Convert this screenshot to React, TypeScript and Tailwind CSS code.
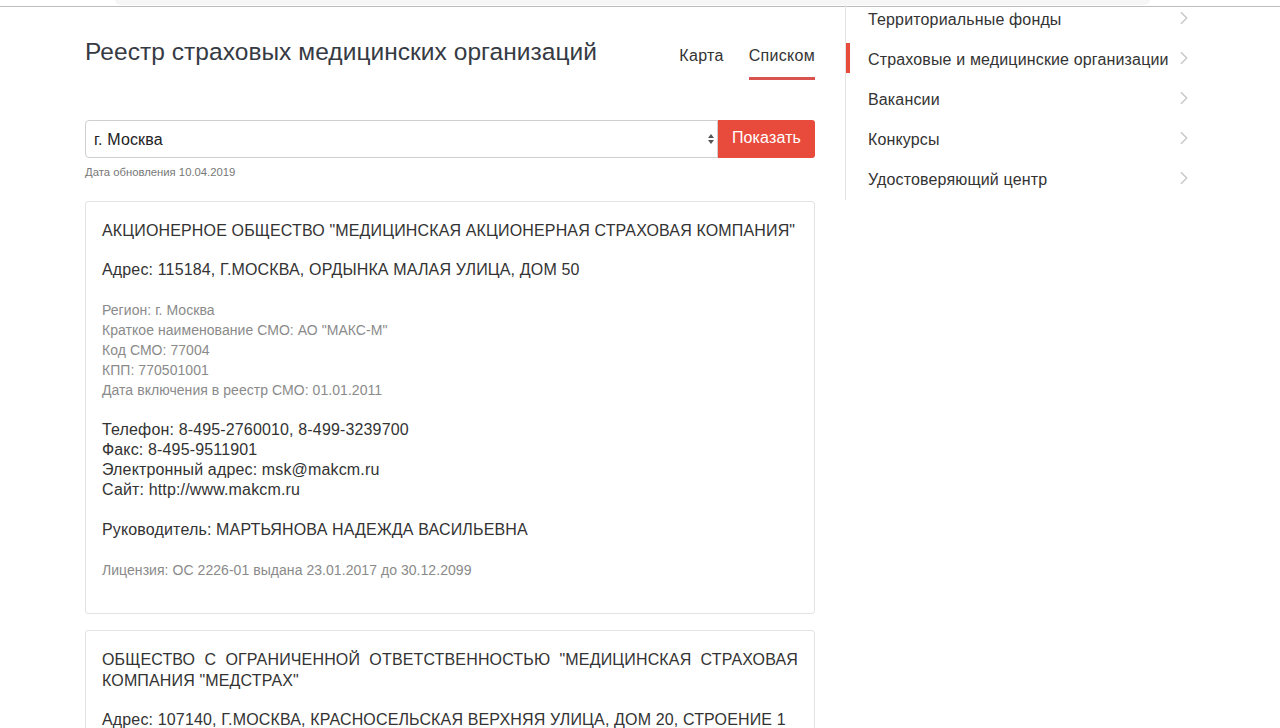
import { ChevronRight } from 'lucide-react';

interface Org {
  name: string;
  address: string;
  region: string;
  shortName: string;
  code: string;
  kpp: string;
  included: string;
  phone: string;
  fax: string;
  email: string;
  site: string;
  head: string;
  license: string;
}

const orgs: Org[] = [
  {
    name: 'АКЦИОНЕРНОЕ ОБЩЕСТВО "МЕДИЦИНСКАЯ АКЦИОНЕРНАЯ СТРАХОВАЯ КОМПАНИЯ"',
    address: '115184, Г.МОСКВА, ОРДЫНКА МАЛАЯ УЛИЦА, ДОМ 50',
    region: 'г. Москва',
    shortName: 'АО "МАКС-М"',
    code: '77004',
    kpp: '770501001',
    included: '01.01.2011',
    phone: '8-495-2760010, 8-499-3239700',
    fax: '8-495-9511901',
    email: 'msk@makcm.ru',
    site: 'http://www.makcm.ru',
    head: 'МАРТЬЯНОВА НАДЕЖДА ВАСИЛЬЕВНА',
    license: 'ОС 2226-01 выдана 23.01.2017 до 30.12.2099',
  },
  {
    name: 'ОБЩЕСТВО С ОГРАНИЧЕННОЙ ОТВЕТСТВЕННОСТЬЮ "МЕДИЦИНСКАЯ СТРАХОВАЯ КОМПАНИЯ "МЕДСТРАХ"',
    address: '107140, Г.МОСКВА, КРАСНОСЕЛЬСКАЯ ВЕРХНЯЯ УЛИЦА, ДОМ 20, СТРОЕНИЕ 1',
    region: 'г. Москва',
    shortName: 'ООО "МСК "МЕДСТРАХ"',
    code: '77011',
    kpp: '770801001',
    included: '01.01.2011',
    phone: '8-495-6409393',
    fax: '8-495-6409393',
    email: 'info@medstrakh.ru',
    site: 'http://www.medstrakh.ru',
    head: 'ИВАНОВ ИВАН ИВАНОВИЧ',
    license: 'ОС 3676-01 выдана 10.10.2017 до 30.12.2099',
  },
];

const menu = [
  'Территориальные фонды',
  'Страховые и медицинские организации',
  'Вакансии',
  'Конкурсы',
  'Удостоверяющий центр',
];

const OrgCard = ({ org }: { org: Org }) => (
  <div className="border border-[#e3e3e3] rounded-[3px] px-[16px] pt-[18px] pb-[33px] text-[#333] tracking-[0.15px]">
    <div className="text-[16px] leading-[21px] text-justify">{org.name}</div>
    <div className="mt-[19px] text-[16px] leading-[20px]">Адрес: {org.address}</div>
    <div className="mt-[20px] text-[14px] leading-[20px] text-[#8a8a8a] tracking-[0.05px]">
      <div>Регион: {org.region}</div>
      <div>Краткое наименование СМО: {org.shortName}</div>
      <div>Код СМО: {org.code}</div>
      <div>КПП: {org.kpp}</div>
      <div>Дата включения в реестр СМО: {org.included}</div>
    </div>
    <div className="mt-[20px] text-[16px] leading-[20px]">
      <div>Телефон: {org.phone}</div>
      <div>Факс: {org.fax}</div>
      <div>Электронный адрес: {org.email}</div>
      <div>Сайт: {org.site}</div>
    </div>
    <div className="mt-[20px] text-[16px] leading-[20px]">Руководитель: {org.head}</div>
    <div className="mt-[20px] text-[14px] leading-[20px] text-[#8a8a8a] tracking-[0.05px]">Лицензия: {org.license}</div>
  </div>
);

const App = () => {
  return (
    <div className="relative h-[728px] overflow-hidden bg-white font-['Liberation_Sans',Arial,sans-serif] text-[#333]">
      <div className="absolute left-[115px] right-[130px] top-0 h-[5px] bg-[#f6f6f6] rounded-b-[8px]" />
      <div className="h-[6px]" />
      <div className="h-px bg-[#bdbdbd]" />
      <div className="flex">
        <div className="ml-[85px] w-[730px]">
          <div className="flex items-start justify-between pt-[29px]">
            <h1 className="text-[24.5px] leading-[32px] text-[#363a43] tracking-[0.05px]">Реестр страховых медицинских организаций</h1>
            <div className="flex gap-[25px] text-[16px] tracking-[0.3px] pt-[8px]">
              <div className="pb-[10px]">Карта</div>
              <div className="pb-[9px] border-b-[3px] border-[#d9534f]">Списком</div>
            </div>
          </div>
          <div className="mt-[40px] flex h-[38px]">
            <div className="flex-1 flex items-center justify-between border border-[#cfcfcf] rounded-l-[4px] pl-[8px] pr-[2px]">
              <span className="text-[16px] text-[#222] pt-[2px] tracking-[0.15px]">г. Москва</span>
              <svg width="8" height="16" viewBox="0 0 8 16" className="text-[#555]">
                <path d="M4 3 L7 7 L1 7 Z" fill="currentColor" />
                <path d="M4 13 L7 9 L1 9 Z" fill="currentColor" />
              </svg>
            </div>
            <button className="w-[97px] bg-[#e84b3c] text-white text-[16px] tracking-[0.15px] rounded-r-[3px] pb-[2px]">Показать</button>
          </div>
          <div className="mt-[7px] text-[11.3px] leading-[14px] text-[#777]">Дата обновления 10.04.2019</div>
          <div className="mt-[22px] flex flex-col gap-[16px]">
            {orgs.map((org, i) => (
              <OrgCard key={i} org={org} />
            ))}
          </div>
        </div>
        <div className="ml-[30px] w-[350px]">
          <div className="border-l border-[#e3e3e3] -mt-px">
            {menu.map((item, i) => (
              <div key={i} className="relative flex items-center justify-between h-[40px] pl-[22px] first:-mt-[7px]">
                {i === 1 && <div className="absolute left-0 top-[3px] w-[4px] h-[30px] bg-[#e84b3c]" />}
                <span className="text-[16px] text-[#333] tracking-[0.15px]">{item}</span>
                <ChevronRight size={22} strokeWidth={1.3} className="text-[#c4c4c4] -mt-[4px]" />
              </div>
            ))}
          </div>
        </div>
      </div>
    </div>
  );
};

export default App;
